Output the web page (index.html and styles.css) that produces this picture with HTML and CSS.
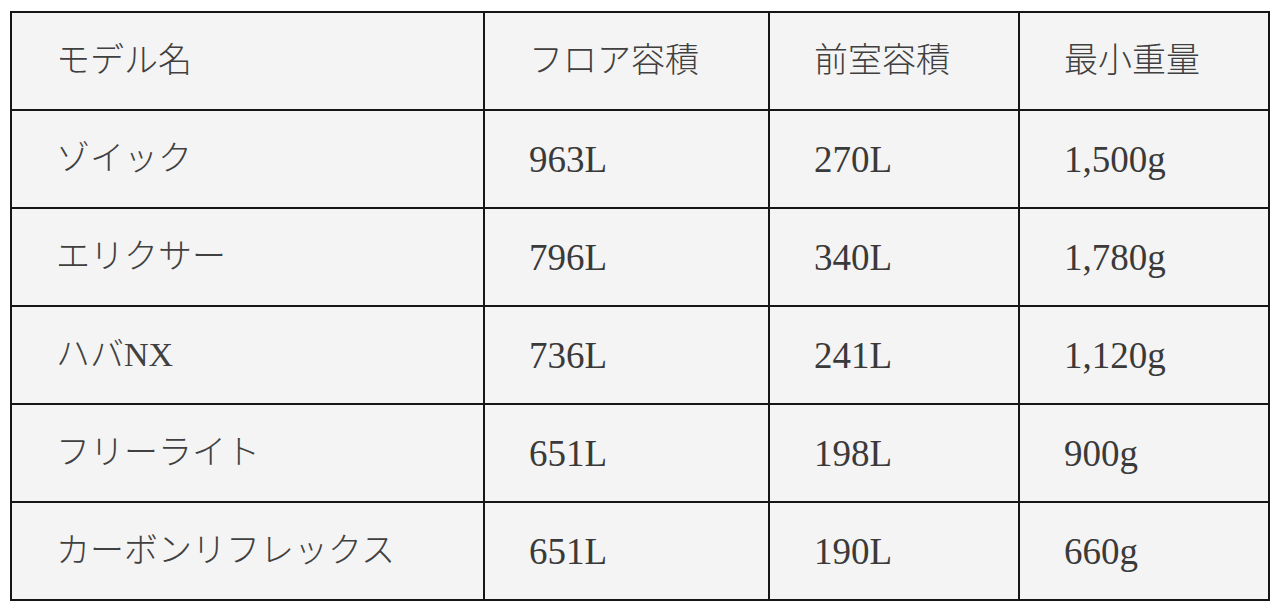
FILE: index.html
```html
<!DOCTYPE html>
<html lang="ja">
<head>
<meta charset="utf-8">
<title>モデル比較</title>
<link rel="stylesheet" href="styles.css">
</head>
<body>
<div class="wrap">
<table class="spec">
  <colgroup>
    <col class="c1"><col class="c2"><col class="c3"><col class="c4">
  </colgroup>
  <thead>
    <tr><th>モデル名</th><th>フロア容積</th><th>前室容積</th><th>最小重量</th></tr>
  </thead>
  <tbody>
    <tr><td class="name">ゾイック</td><td>963L</td><td>270L</td><td>1,500g</td></tr>
    <tr><td class="name">エリクサー</td><td>796L</td><td>340L</td><td>1,780g</td></tr>
    <tr><td class="name">ハバNX</td><td>736L</td><td>241L</td><td>1,120g</td></tr>
    <tr><td class="name">フリーライト</td><td>651L</td><td>198L</td><td>900g</td></tr>
    <tr><td class="name">カーボンリフレックス</td><td>651L</td><td>190L</td><td>660g</td></tr>
  </tbody>
</table>
</div>
</body>
</html>
```
FILE: styles.css
```css
html, body {
  margin: 0;
  padding: 0;
  background: #ffffff;
}
.wrap {
  padding: 11px 0 0 10px;
}
.spec {
  border-collapse: collapse;
  table-layout: fixed;
  width: 1260px;
  background: #f4f4f4;
  color: #3a3a3a;
  font-family: "Liberation Serif", "Noto Sans CJK JP", serif;
}
.c1 { width: 473px; }
.c2 { width: 285px; }
.c3 { width: 250px; }
.c4 { width: 250px; }
.spec th,
.spec td {
  border: 2px solid #161616;
  height: 96px;
  padding: 0 0 0 44px;
  text-align: left;
  vertical-align: middle;
  font-weight: normal;
  font-size: 37px;
  line-height: 1;
  white-space: nowrap;
}
.spec th,
.spec td.name {
  font-size: 34px;
  font-weight: 300;
  color: #404040;
}
```
